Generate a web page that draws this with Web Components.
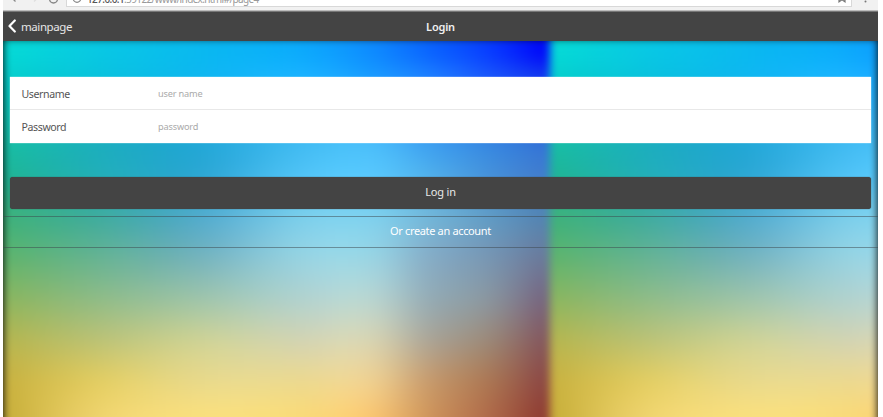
<!DOCTYPE html>
<html lang="en">
<head>
<meta charset="utf-8">
<title>Login</title>
<style>
html,body{margin:0;height:100%;overflow:hidden;background:#fff}
body{font-family:"Noto Sans","Open Sans",sans-serif}
</style>
</head>
<body>
<login-app></login-app>
<script>
const define = (name, html, setup) => customElements.define(name, class extends HTMLElement {
  constructor() {
    super();
    this.attachShadow({mode: "open"}).innerHTML = html;
  }
  connectedCallback() { if (setup) setup(this); }
});

define("browser-bar", `<style>
:host{display:flex;height:11px;box-sizing:border-box;background:#f1f1f1;border-bottom:1px solid #bcbcbc;overflow:hidden}
svg{display:block;flex:none}
.nav{width:63px;height:8px}
.url{flex:1;height:7px;background:#fff;border:solid #d8d8d8;border-width:0 1px 1px;box-sizing:border-box;display:flex;overflow:hidden}
.address{font-size:10px;line-height:14px;margin-top:-8px;color:#999;white-space:nowrap;letter-spacing:-.61px;flex:1}
b{font-weight:500;color:#555}
.more{width:26px;height:8px}
</style>
<svg class="nav" viewBox="0 0 63 8" fill="none" stroke="#888" stroke-width="1.3"><path d="M12.5 1.5 9.5-1.5"/><path d="M31 1.5 34-1.5" stroke="#ddd"/><path d="M54.500-1A4 4 0 0 1 46.500-1"/></svg>
<div class="url"><svg width="20" height="7" fill="none" stroke="#888" stroke-width="1.2"><circle cx="10" cy="-1.5" r="3.8"/><path d="M10-3V0"/></svg><div class="address"><b>127.0.0.1</b>:59122/www/index.html#/page4</div><svg width="15" height="7" fill="none" stroke="#777" stroke-width="1.2"><path d="M3-3 3 1.800 6-.2 9 1.800 9-3"/></svg></div>
<svg class="more" viewBox="0 0 26 8"><circle cx="13.500" cy="1.500" r="1" fill="#777"/></svg>`);

define("title-bar", `<style>
:host{display:grid;grid-template-columns:1fr auto 1fr;align-items:center;height:30px;box-sizing:border-box;background:#444;border-top:1px solid #777;color:#f0f0f0;padding:0 5px;position:relative;box-shadow:0 0 2px rgba(0,0,0,.5);clip-path:inset(0 0 -3px)}
.back{display:flex;align-items:center;gap:5px;font-size:11.5px;line-height:16px;letter-spacing:-.42px;color:#e6e6e6}
h1{margin:0;font-size:11px;line-height:16px;font-weight:600;letter-spacing:-.2px}
svg{display:block;margin-top:-1px}
</style>
<div class="back"><svg width="8" height="14" viewBox="0 0 8 14" fill="none" stroke="#fff" stroke-width="2.2" stroke-linecap="round" stroke-linejoin="round"><path d="M6.800 1.500 1.500 7l5.300 5.500"/></svg><span><slot name="back"></slot></span></div>
<h1><slot></slot></h1>`);

/* Colour samples of one background tile: columns at `stops`, one row per y. */
const tile = 547;
const stops = [4,97,197,297,367,427,487,537];
const mesh = [
 [14,["6,218,214","8,200,228","10,185,240","12,170,252","14,140,255","10,100,255","8,60,255","2,10,250"]],
 [34,["6,208,205","10,195,222","15,183,240","25,178,255","25,155,255","28,125,255","25,85,250","18,55,240"]],
 [104,["24,190,165","28,175,190","35,168,215","65,187,242","75,190,250","62,160,240","55,135,225","52,115,215"]],
 [134,["32,182,150","35,175,185","45,168,212","80,195,245","88,200,252","80,175,235","70,145,218","65,125,205"]],
 [174,["60,178,125","62,172,160","80,172,205","120,205,235","125,208,238","112,182,218","95,155,198","82,132,180"]],
 [209,["88,180,112","95,178,150","110,178,192","145,210,228","148,212,230","130,174,202","115,150,182","103,125,160"]],
 [259,["140,182,95","145,188,135","160,197,170","178,210,205","185,213,208","150,172,180","138,148,157","120,104,128"]],
 [299,["180,182,80","188,195,118","205,210,150","210,212,178","215,212,178","172,165,150","155,135,120","133,90,95"]],
 [339,["200,178,65","225,205,100","232,217,138","235,217,145","238,208,145","198,155,110","170,118,85","142,75,70"]],
 [376,["200,175,58","240,212,110","250,224,125","250,218,120","250,198,112","207,148,90","175,105,72","145,62,50"]]
].map(([y, row]) => [y, row.map(c => c.split(",").map(Number))]);

/* Cubic Hermite interpolation through unevenly spaced samples. */
function smooth(xs, vs, x) {
  const last = xs.length - 1;
  if (x <= xs[0]) return vs[0];
  if (x >= xs[last]) return vs[last];
  let i = 0;
  while (xs[i + 1] < x) i++;
  const slope = k => {
    const a = Math.max(k - 1, 0), b = Math.min(k + 1, last);
    return (vs[b] - vs[a]) / (xs[b] - xs[a]);
  };
  const h = xs[i + 1] - xs[i], t = (x - xs[i]) / h, t2 = t * t, t3 = t2 * t;
  return (2*t3 - 3*t2 + 1) * vs[i] + (t3 - 2*t2 + t) * h * slope(i)
       + (3*t2 - 2*t3) * vs[i + 1] + (t3 - t2) * h * slope(i + 1);
}
function colourAt(x, y) {
  const ys = mesh.map(m => m[0]);
  return "rgb(" + [0, 1, 2].map(ch => {
    const v = smooth(ys, mesh.map(m => smooth(stops, m[1].map(c => c[ch]), x)), y);
    return Math.round(Math.min(255, Math.max(0, v)));
  }).join() + ")";
}

define("colour-mesh", `<style>
:host{display:grid;overflow:hidden;background:#000}
.mesh{grid-area:1/1;display:grid;margin:-3px 0 -20px;filter:blur(4px)}
i{grid-area:1/1}
slot{display:block;grid-area:1/1;position:relative}
</style><div class="mesh"></div><slot></slot>`, el => {
  const box = el.shadowRoot.querySelector(".mesh");
  for (let y = 0, step = 10; y <= 400; y += step) {
    const parts = [];
    for (const start of [0, tile])
      for (let k = 0; k <= 42; k++) parts.push(`${colourAt(tile * k / 42, y)} ${start + tile * k / 42}px`);
    const layer = document.createElement("i");
    layer.style.background = `linear-gradient(90deg,${parts.join()}) 0 0/${tile * 2}px 100%`;
    if (y) layer.style.maskImage = `linear-gradient(transparent ${y - step + 3}px,#000 ${y + 3}px)`;
    box.append(layer);
  }
});

define("form-row", `<style>
:host{display:flex;align-items:center;height:33px;box-sizing:border-box;padding:2px 12px 0 11.5px;background:#fff;color:#555;font-size:10.6px;line-height:16px;letter-spacing:-.4px}
:host(:first-child){border-bottom:1px solid #e8e8e8}
:host(:last-child){padding-top:1px}
label{width:136.500px}
span{color:#aaa;font-size:9.200px;letter-spacing:-.18px;padding-top:1px}
</style><label><slot></slot></label><span><slot name="hint"></slot></span>`);

define("solid-button", `<style>
:host{display:flex;justify-content:center;align-items:center;height:32px;box-sizing:border-box;padding-bottom:2px;background:#444;border-radius:3px;box-shadow:0 0 1px #333;color:#e8e8e8;font-size:11px;line-height:16px;letter-spacing:-.2px}
</style><slot></slot>`);

define("outline-button", `<style>
:host{display:flex;justify-content:center;align-items:center;height:32px;box-sizing:border-box;padding-bottom:2px;border:solid rgba(60,70,75,.5);border-width:1px 0;color:#fff;font-size:11px;line-height:16px;letter-spacing:-.35px}
</style><slot></slot>`);

define("login-app", `<style>
:host{display:flex;flex-direction:column;height:417px;margin:0 5px 0 3px}
colour-mesh{flex:1}
.content{padding-top:35.500px}
.fields{margin:0 7px 34.500px;box-shadow:0 0 1px #fff}
solid-button{margin:0 7px 7px}
</style>
<browser-bar></browser-bar>
<title-bar><span slot="back">mainpage</span>Login</title-bar>
<colour-mesh><div class="content">
<div class="fields"><form-row>Username<span slot="hint">user name</span></form-row><form-row>Password<span slot="hint">password</span></form-row></div>
<solid-button>Log in</solid-button>
<outline-button>Or create an account</outline-button>
</div></colour-mesh>`);
</script>
</body>
</html>
